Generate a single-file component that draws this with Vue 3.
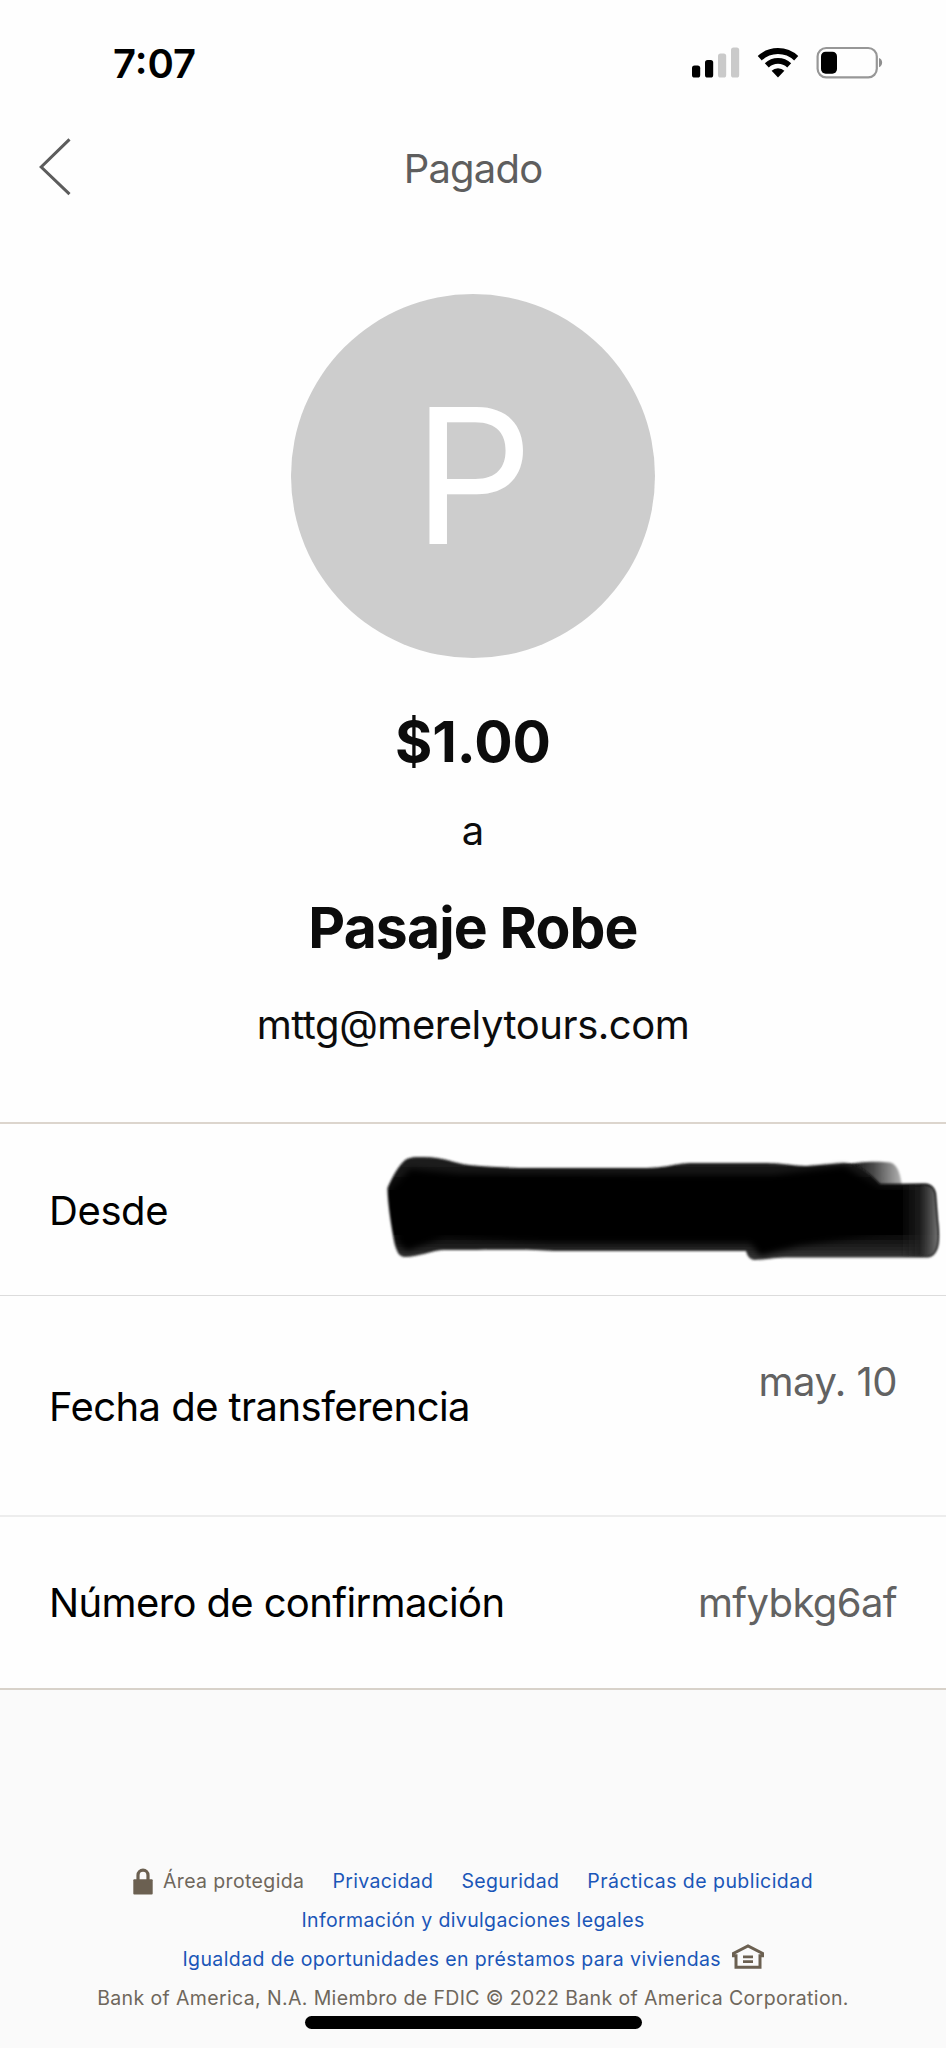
<script setup>
const year = 2022
const footerLinks = [
  { label: 'Privacidad', cls: 'l1' },
  { label: 'Seguridad', cls: 'l2' },
  { label: 'Prácticas de publicidad', cls: 'l3' }
]
</script>

<template>
  <div class="screen">
    <header class="status">
      <span class="time">7:07</span>
      <div class="indicators">
        <svg class="signal" viewBox="0 0 48 32" width="48" height="32">
          <rect x="0" y="19.6" width="8.2" height="12" rx="2.6" fill="#000" />
          <rect x="13" y="14" width="8.2" height="17.6" rx="2.6" fill="#000" />
          <rect x="26" y="7.4" width="8.2" height="24.2" rx="2.6" fill="#cacaca" />
          <rect x="39" y="1.4" width="8.2" height="30.2" rx="2.6" fill="#cacaca" />
        </svg>
        <svg class="wifi" viewBox="0 0 42 32" width="42" height="32">
          <path d="M2.8 12.2A26.5 26.5 0 0 1 39.2 12.2" fill="none" stroke="#000" stroke-width="6" />
          <path d="M9.8 19.3A16.4 16.4 0 0 1 32.2 19.3" fill="none" stroke="#000" stroke-width="5.8" />
          <path d="M21 31.4L14.6 24.8A9 9 0 0 1 27.4 24.8Z" fill="#000" />
        </svg>
        <svg class="battery" viewBox="0 0 68 34" width="68" height="34">
          <rect x="1.6" y="2" width="59.2" height="29.4" rx="8.6" fill="none" stroke="#979797" stroke-width="2.2" />
          <rect x="5" y="5.7" width="16" height="22" rx="4.6" fill="#000" />
          <path d="M63 12C67.2 13.4 67.2 19.8 63 21.2Z" fill="#8f8f8f" />
        </svg>
      </div>
    </header>

    <nav class="bar">
      <svg class="back" viewBox="0 0 34 60" width="34" height="60">
        <path d="M31.5 2.4L3.2 30L31.5 57.2" fill="none" stroke="#5c5c5c" stroke-width="3" />
      </svg>
      <h1 class="title">Pagado</h1>
    </nav>

    <section class="summary">
      <div class="avatar"><span>P</span></div>
      <div class="amount">$1.00</div>
      <div class="to">a</div>
      <div class="name">Pasaje Robe</div>
      <div class="email">mttg@merelytours.com</div>
    </section>

    <section class="details">
      <div class="row from">
        <span class="label desde">Desde</span>
        <svg class="redaction" viewBox="0 0 566 120" width="566" height="120">
          <defs>
            <filter id="soft" x="-5%" y="-15%" width="110%" height="130%"><feGaussianBlur stdDeviation="1.3" /></filter>
            <filter id="softer" x="-5%" y="-20%" width="110%" height="140%"><feGaussianBlur stdDeviation="3" /></filter>
            <linearGradient id="tail" x1="0" x2="1" y1="0" y2="0">
              <stop offset="0" stop-color="#000" />
              <stop offset="0.5" stop-color="#484848" />
              <stop offset="1" stop-color="#b4b4b4" />
            </linearGradient>
            <linearGradient id="tip" gradientUnits="userSpaceOnUse" x1="520" x2="559" y1="0" y2="0">
              <stop offset="0" stop-color="#222" stop-opacity="0" />
              <stop offset="0.5" stop-color="#222" stop-opacity="0.8" />
              <stop offset="1" stop-color="#777" />
            </linearGradient>
            <linearGradient id="base" x1="0" x2="0" y1="0" y2="1">
              <stop offset="0" stop-color="#222" />
              <stop offset="0.4" stop-color="#000" />
              <stop offset="0.75" stop-color="#060606" />
              <stop offset="1" stop-color="#3a3a3a" />
            </linearGradient>
          </defs>
          <path filter="url(#soft)" fill="url(#tail)" d="M464 16C476 11 500 11 510 12.5C518 14 521 26 522 38H464Z" />
          <path filter="url(#soft)" fill="url(#base)" d="M7.6 38C12 28 17 18 23 12C28 7 33 7 40 7C62 6 73 13 89 15C110 17 130 18 155 18H262C290 18 294 13 313 13H384C405 13 412 16 427 16L464 13C478 13 490 24 500 34L545 33.5C552 34 555 38 556 44L558 70C560 86 559 96 557 100C554 106 551 107.5 546 107.5H405C390 108 382 110 374 110C369 109 367 105 366 101H174C150 99 110 100 63 100C50 101 38 107 25 107C19 107 17 102 15 95C11 75 8 55 7.6 38Z" />
          <path filter="url(#softer)" fill="#000" d="M11 40L30 19L80 24L270 25L394 25L464 16L500 38L530 40L524 80L420 95L380 106L370 92H170C130 90 100 88 65 86L27 101L19 94Z" />
          <path filter="url(#soft)" fill="url(#tip)" d="M520 36L545 35C552 36 554 39 555 44L557 70C559 86 558 94 556 99C554 104 551 106 546 106H520Z" />
        </svg>
      </div>
      <div class="row date">
        <span class="label fecha">Fecha de transferencia</span>
        <span class="value may">may. 10</span>
      </div>
      <div class="row confirm">
        <span class="label numero">Número de confirmación</span>
        <span class="value code">mfybkg6af</span>
      </div>
    </section>

    <footer class="footer">
      <div class="line first">
        <svg class="lock" viewBox="0 0 20 27" width="20" height="27">
          <path d="M5 12V7.2A5 5 0 0 1 15 7.2V12" fill="none" stroke="#6b6051" stroke-width="3.2" />
          <rect x="0.3" y="11.2" width="19.4" height="15.4" rx="1" fill="#6b6051" />
        </svg>
        <span class="secure">Área protegida</span>
        <a v-for="link in footerLinks" :key="link.label" :class="['link', link.cls]">{{ link.label }}</a>
      </div>
      <div class="line"><a class="link">Información y divulgaciones legales</a></div>
      <div class="line">
        <a class="link equal">Igualdad de oportunidades en préstamos para viviendas</a>
        <svg class="house" viewBox="0 0 32 26" width="32" height="26">
          <path d="M1.4 11.8V9.4L16 2L30.6 9.4V11.8H28V23.2H4V11.8Z" fill="none" stroke="#6b6051" stroke-width="3" />
          <path d="M11 12.8H21M11 17.6H21" stroke="#6b6051" stroke-width="2.7" />
        </svg>
      </div>
      <div class="line">Bank of America, N.A. Miembro de FDIC © {{ year }} Bank of America Corporation.</div>
      <div class="home-indicator"></div>
    </footer>
  </div>
</template>

<style>
body {
  margin: 0;
  background: #fefefe;
}
</style>

<style scoped>
.screen {
  box-sizing: border-box;
  width: 946px;
  height: 2048px;
  overflow: hidden;
  display: flex;
  flex-direction: column;
  background: #fefefe;
  color: #0c0c0c;
  font-family: Inter, "Liberation Sans", sans-serif;
  font-size: 40px;
  line-height: 50px;
}
.status {
  box-sizing: border-box;
  height: 120px;
  padding: 38px 62px 0 113px;
  display: flex;
  justify-content: space-between;
  align-items: flex-start;
}
.time {
  margin-top: 1px;
  font-weight: 600;
  color: #000;
}
.indicators {
  display: flex;
  align-items: flex-start;
  padding-top: 8px;
}
.wifi { margin: 0 17.5px 0 16.5px; }
.bar {
  box-sizing: border-box;
  height: 173.5px;
  padding: 16.5px 38px 0;
  display: grid;
  grid-template-columns: 1fr auto 1fr;
  align-items: start;
}
.title {
  margin: 7px 0 0;
  font-size: 40px;
  font-weight: 400;
  letter-spacing: -0.8px;
  color: #5e5e5e;
}
.summary {
  height: 828.5px;
  display: flex;
  flex-direction: column;
  align-items: center;
}
.avatar {
  flex: none;
  width: 364px;
  height: 364px;
  border-radius: 50%;
  background: #cdcdcd;
  display: flex;
  align-items: center;
  justify-content: center;
  color: #fff;
  font-size: 188px;
  line-height: 366px;
}
.amount, .name {
  font-size: 57px;
  line-height: 70px;
  font-weight: 700;
}
.amount { margin-top: 49px; }
.to { margin-top: 29px; }
.name { margin-top: 37px; letter-spacing: -0.85px; }
.email { margin-top: 37px; letter-spacing: -0.46px; }
.details {
  border-top: 2px solid #dcd5cd;
  border-bottom: 2px solid #d8d2ca;
  height: 564px;
}
.row {
  box-sizing: border-box;
  padding: 0 49px;
  display: flex;
  justify-content: space-between;
  align-items: flex-start;
}
.from {
  height: 172px;
  padding-right: 0;
  border-bottom: 1px solid #dcdcdc;
}
.date {
  height: 221px;
  border-bottom: 2px solid #ededed;
}
.label { color: #000; }
.value { color: #626262; }
.desde { margin-top: 61.5px; letter-spacing: -0.4px; }
.redaction { margin-top: 26px; }
.fecha { margin-top: 85.5px; letter-spacing: -0.56px; }
.may { margin-top: 60.5px; letter-spacing: -0.5px; }
.numero { margin-top: 61px; letter-spacing: -0.62px; }
.code { margin-top: 61px; letter-spacing: -0.62px; }
.footer {
  flex: 1;
  padding-top: 172px;
  background: #fafafa;
  display: flex;
  flex-direction: column;
  align-items: center;
  font-size: 19.5px;
  line-height: 39px;
  letter-spacing: 0.37px;
  color: #6f675c;
}
.line {
  height: 39px;
  display: flex;
  align-items: flex-start;
  white-space: nowrap;
}
.link { color: #1a56b8; }
.lock { margin: 5.5px 10px 0 0; }
.l1, .l2, .l3 { margin-left: 28px; }
.l3 { letter-spacing: 0.45px; }
.equal { letter-spacing: 0.39px; }
.house { margin: 3.5px 0 0 10.5px; }
.home-indicator {
  margin-top: -2px;
  width: 337px;
  height: 12.5px;
  border-radius: 7px;
  background: #000;
}
</style>
